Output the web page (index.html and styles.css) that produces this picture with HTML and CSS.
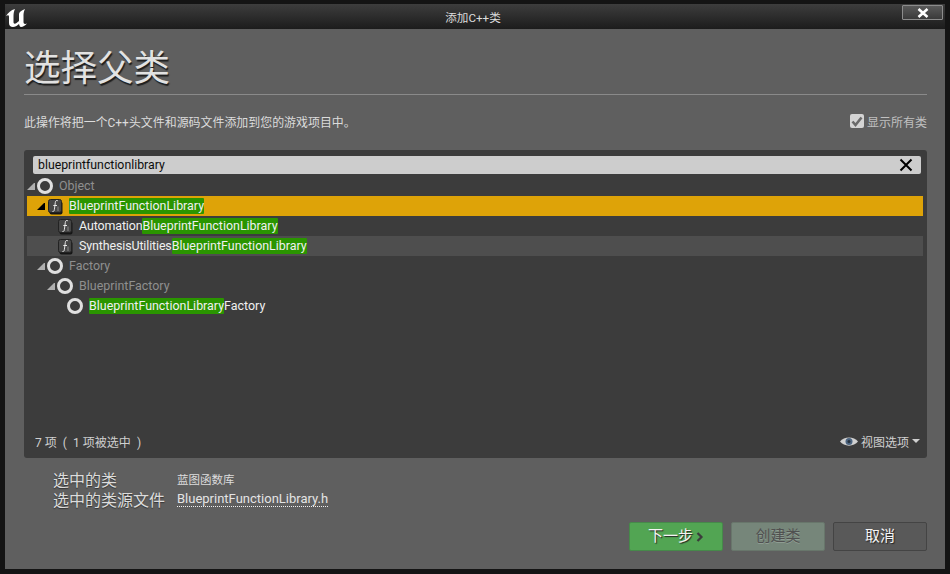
FILE: index.html
```html
<!DOCTYPE html>
<html lang="zh-CN">
<head>
    <meta charset="UTF-8">
    <title>添加C++类</title>
    <link rel="stylesheet" href="styles.css">
</head>
<body>
    <div class="window">
        <div class="titlebar">
            <svg class="logo" width="24" height="22" viewBox="0 0 24 22">
                <path fill="#fff" d="M1 9C3 6 6 3 10 2C9 4 8.500 6 8.500 9V15C8.500 17 10 17 11.500 16L14 14V7C14 5 16 4 20 2C18.500 5 18.500 7 18.500 9V15C18.500 17 20 17.500 22 16.500C20 18.500 18 20 16 20C15 20 14.500 19 14 17C12 19 10 20 8 20C5.500 20 4 18.500 4 16V10C4 8 3 8 1 9Z"/>
            </svg>
            <span class="title-text">添加C++类</span>
            <button class="close-btn">
                <svg width="12" height="10" viewBox="0 0 12 10"><path d="M1.500 1L10.500 9M10.500 1L1.500 9" stroke="#fff" stroke-width="2.600"/></svg>
            </button>
        </div>
        <div class="content">
            <h1 class="heading">选择父类</h1>
            <div class="intro">
                <span>此操作将把一个C++头文件和源码文件添加到您的游戏项目中。</span>
                <label class="show-all">
                    <span class="checkbox">
                        <svg width="14" height="14" viewBox="0 0 14 14"><path d="M2.500 7.500L5.500 11L11.500 3.500" fill="none" stroke="#6a6a6a" stroke-width="2.600"/></svg>
                    </span>
                    显示所有类
                </label>
            </div>

            <div class="panel">
                <div class="search">
                    <span>blueprintfunctionlibrary</span>
                    <svg width="14" height="14" viewBox="0 0 14 14"><path d="M1.500 1.500L12.500 12.500M12.500 1.500L1.500 12.500" stroke="#000" stroke-width="2"/></svg>
                </div>
                <div class="tree">
                    <div class="row level-0 dim">
                        <span class="arrow open"></span>
                        <span class="ring"></span>
                        <span>Object</span>
                    </div>
                    <div class="row level-1 selected">
                        <span class="arrow open black"></span>
                        <svg class="fn" width="17" height="17" viewBox="0 0 17 17"><use href="#fn-icon"/></svg>
                        <span><em>BlueprintFunctionLibrary</em></span>
                    </div>
                    <div class="row level-2">
                        <span class="arrow none"></span>
                        <svg class="fn" width="17" height="17" viewBox="0 0 17 17"><use href="#fn-icon"/></svg>
                        <span><span class="tight">Automation</span><em>BlueprintFunctionLibrary</em></span>
                    </div>
                    <div class="row level-2 hover">
                        <span class="arrow none"></span>
                        <svg class="fn" width="17" height="17" viewBox="0 0 17 17"><use href="#fn-icon"/></svg>
                        <span><span class="tight">SynthesisUtilities</span><em>BlueprintFunctionLibrary</em></span>
                    </div>
                    <div class="row level-1 dim">
                        <span class="arrow open"></span>
                        <span class="ring"></span>
                        <span>Factory</span>
                    </div>
                    <div class="row level-2 dim">
                        <span class="arrow open"></span>
                        <span class="ring"></span>
                        <span>BlueprintFactory</span>
                    </div>
                    <div class="row level-3">
                        <span class="arrow none"></span>
                        <span class="ring"></span>
                        <span><em>BlueprintFunctionLibrary</em>Factory</span>
                    </div>
                </div>
                <div class="status">
                    <span>7 项&ensp;(&ensp;1 项被选中&ensp;)</span>
                    <span class="view-options">
                        <svg width="18" height="11" viewBox="0 0 18 11">
                            <path d="M0 5.500C4 0 14 0 18 5.500C14 11 4 11 0 5.500Z" fill="#d0d0d0"/>
                            <circle cx="9" cy="5.500" r="3.500" fill="#4c6480"/>
                            <circle cx="9" cy="5.500" r="1.500" fill="#26323f"/>
                        </svg>
                        视图选项
                        <span class="caret"></span>
                    </span>
                </div>
            </div>

            <div class="details">
                <div class="detail-row">
                    <span class="detail-label">选中的类</span>
                    <span class="detail-value">蓝图函数库</span>
                </div>
                <div class="detail-row">
                    <span class="detail-label">选中的类源文件</span>
                    <a class="detail-link">BlueprintFunctionLibrary.h</a>
                </div>
            </div>

            <div class="actions">
                <button class="btn next"><span class="btn-label">下一步</span><svg width="8" height="10" viewBox="0 0 8 10"><path d="M1.500 1L5.500 5L1.500 9" fill="none" stroke="#3c3c3c" stroke-width="2.200"/></svg></button>
                <button class="btn create"><span class="btn-label">创建类</span></button>
                <button class="btn cancel"><span class="btn-label">取消</span></button>
            </div>
        </div>
    </div>

    <svg class="defs" width="0" height="0">
        <symbol id="fn-icon" viewBox="0 0 17 17">
            <rect x="2.500" y="3.500" width="13" height="13" rx="2" fill="#161616"/>
            <rect x="1.500" y="1.500" width="13" height="13" rx="2" fill="#474747" stroke="#222"/>
            <path d="M5.500 13.500C7 13.800 7.300 12.500 7.600 10L8.300 4.500C8.600 2.500 9.600 2 10.800 2.800M6.300 7.500H10" fill="none" stroke="#e8e8e8" stroke-width="1"/>
            <path d="M11 8.500V13" stroke="#8a8a8a" stroke-width="1"/>
        </symbol>
    </svg>
</body>
</html>
```

FILE: styles.css
```css
* {
    box-sizing: border-box;
}
html, body {
    margin: 0;
    height: 100%;
}
body {
    font-family: Roboto, "Noto Sans CJK SC", sans-serif;
    font-size: 12px;
    color: #e4e4e4;
    background-color: #141414;
    overflow: hidden;
}
.window {
    height: 574px;
    padding: 4px 5px 5px 5px;
    display: flex;
    flex-direction: column;
}
.titlebar {
    height: 25px;
    flex: none;
    position: relative;
    display: flex;
    justify-content: center;
    align-items: center;
    background: linear-gradient(#3d3d3d, #1c1c1c);
    color: #dcdcdc;
    font-size: 11.600px;
}
.title-text {
    margin-left: -4px;
}
.logo {
    position: absolute;
    left: 0;
    top: 3px;
}
.close-btn {
    position: absolute;
    right: 2px;
    top: 1px;
    width: 41px;
    height: 15px;
    padding: 0;
    display: flex;
    align-items: center;
    justify-content: center;
    background: linear-gradient(#5a5a5a, #3a3a3a);
    border: 1px solid #8c8c8c;
    border-radius: 1px;
}
.content {
    flex: 1;
    background-color: #5f5f5f;
    padding: 0 18px 0 19px;
    display: flex;
    flex-direction: column;
}
.heading {
    margin: 0;
    height: 66px;
    padding-top: 14px;
    font-size: 36.500px;
    font-weight: 400;
    line-height: 52px;
    color: #e2e2e2;
    text-shadow: 1px 2px 1px #1e1e1e;
    border-bottom: 1px solid #8a8a8a;
}
.intro {
    display: flex;
    justify-content: space-between;
    align-items: center;
    height: 18px;
    margin-top: 17px;
    font-size: 11.950px;
    color: #dcdcdc;
}
.show-all {
    display: flex;
    align-items: center;
    gap: 3px;
    font-size: 12px;
    color: #c0c0c0;
}
.checkbox {
    width: 14px;
    height: 14px;
    border-radius: 2px;
    background-color: #d4d4d4;
    display: flex;
}
.panel {
    height: 308px;
    margin-top: 20px;
    background-color: #3c3c3c;
    border-radius: 3px;
    display: flex;
    flex-direction: column;
}
.search {
    flex: none;
    height: 18px;
    margin: 6px 6px 0 9px;
    padding: 0 8px 0 5px;
    display: flex;
    justify-content: space-between;
    align-items: center;
    background-color: #cdcdcd;
    border-radius: 2px;
    color: #0c0c0c;
    font-size: 12.300px;
}
.tree {
    margin: 2px 4px 0 3px;
    flex: 1;
}
.row {
    height: 20px;
    display: flex;
    align-items: center;
    font-size: 12.450px;
    color: #f0f0f0;
    line-height: 16px;
}
.row.dim {
    color: #8f8f8f;
}
.row.selected {
    background-color: #dea308;
}
.row.hover {
    background-color: #4e4e4e;
}
.level-0 {
    padding-left: 0;
}
.level-1 {
    padding-left: 10px;
}
.level-2 {
    padding-left: 20px;
}
.level-3 {
    padding-left: 30px;
}
.row em {
    font-style: normal;
    background-color: #2a9500;
    border-radius: 1px;
    display: inline-block;
    height: 16px;
}
.tight {
    letter-spacing: -0.120px;
}
.arrow {
    width: 8px;
    height: 8px;
    flex: none;
    margin-right: 2px;
}
.arrow.open {
    border-style: solid;
    border-width: 0 0 7px 7px;
    border-color: transparent transparent #b0b0b0 transparent;
}
.arrow.open.black {
    border-color: transparent transparent #000 transparent;
}
.ring {
    width: 16px;
    height: 16px;
    flex: none;
    border: 3px solid #e0e0e0;
    border-radius: 50%;
    margin-right: 6px;
}
.fn {
    flex: none;
    margin-right: 5px;
}
.status {
    flex: none;
    height: 34px;
    padding: 0 7px 0 11px;
    display: flex;
    justify-content: space-between;
    align-items: center;
    font-size: 12px;
    color: #d0d0d0;
}
.view-options {
    display: flex;
    align-items: center;
    gap: 3px;
}
.caret {
    width: 0;
    height: 0;
    border-style: solid;
    border-width: 4px 4px 0 4px;
    border-color: #d0d0d0 transparent transparent transparent;
}
.details {
    margin-top: 11px;
    padding-left: 29px;
}
.detail-row {
    display: flex;
    align-items: center;
    height: 20px;
}
.detail-label {
    width: 124px;
    font-size: 16px;
    color: #dcdcdc;
    text-shadow: 0 1px 1px #333;
}
.detail-value {
    font-size: 11.500px;
    color: #dcdcdc;
}
.detail-link {
    font-size: 13px;
    color: #e4e4e4;
    border-bottom: 1px dotted #f0f0f0;
    line-height: 14px;
}
.actions {
    display: flex;
    justify-content: flex-end;
    gap: 8px;
    margin-top: 13px;
}
.btn {
    width: 94px;
    height: 29px;
    padding: 0;
    font-family: inherit;
    font-size: 15px;
    border-radius: 2px;
    display: flex;
    align-items: center;
    justify-content: center;
    gap: 3px;
    color: #f4f4f4;
    text-shadow: 1px 1px 1px #222;
}
.btn-label {
    margin-top: -5px;
}
.next {
    background-color: #52a553;
    border: 1px solid #46894a;
}
.create {
    background-color: #76867a;
    border: 1px solid #68766b;
    color: #505050;
    text-shadow: 0 1px 0 #8e9c92;
}
.cancel {
    background-color: #595959;
    border: 1px solid #444;
}
.defs {
    position: absolute;
}
```
